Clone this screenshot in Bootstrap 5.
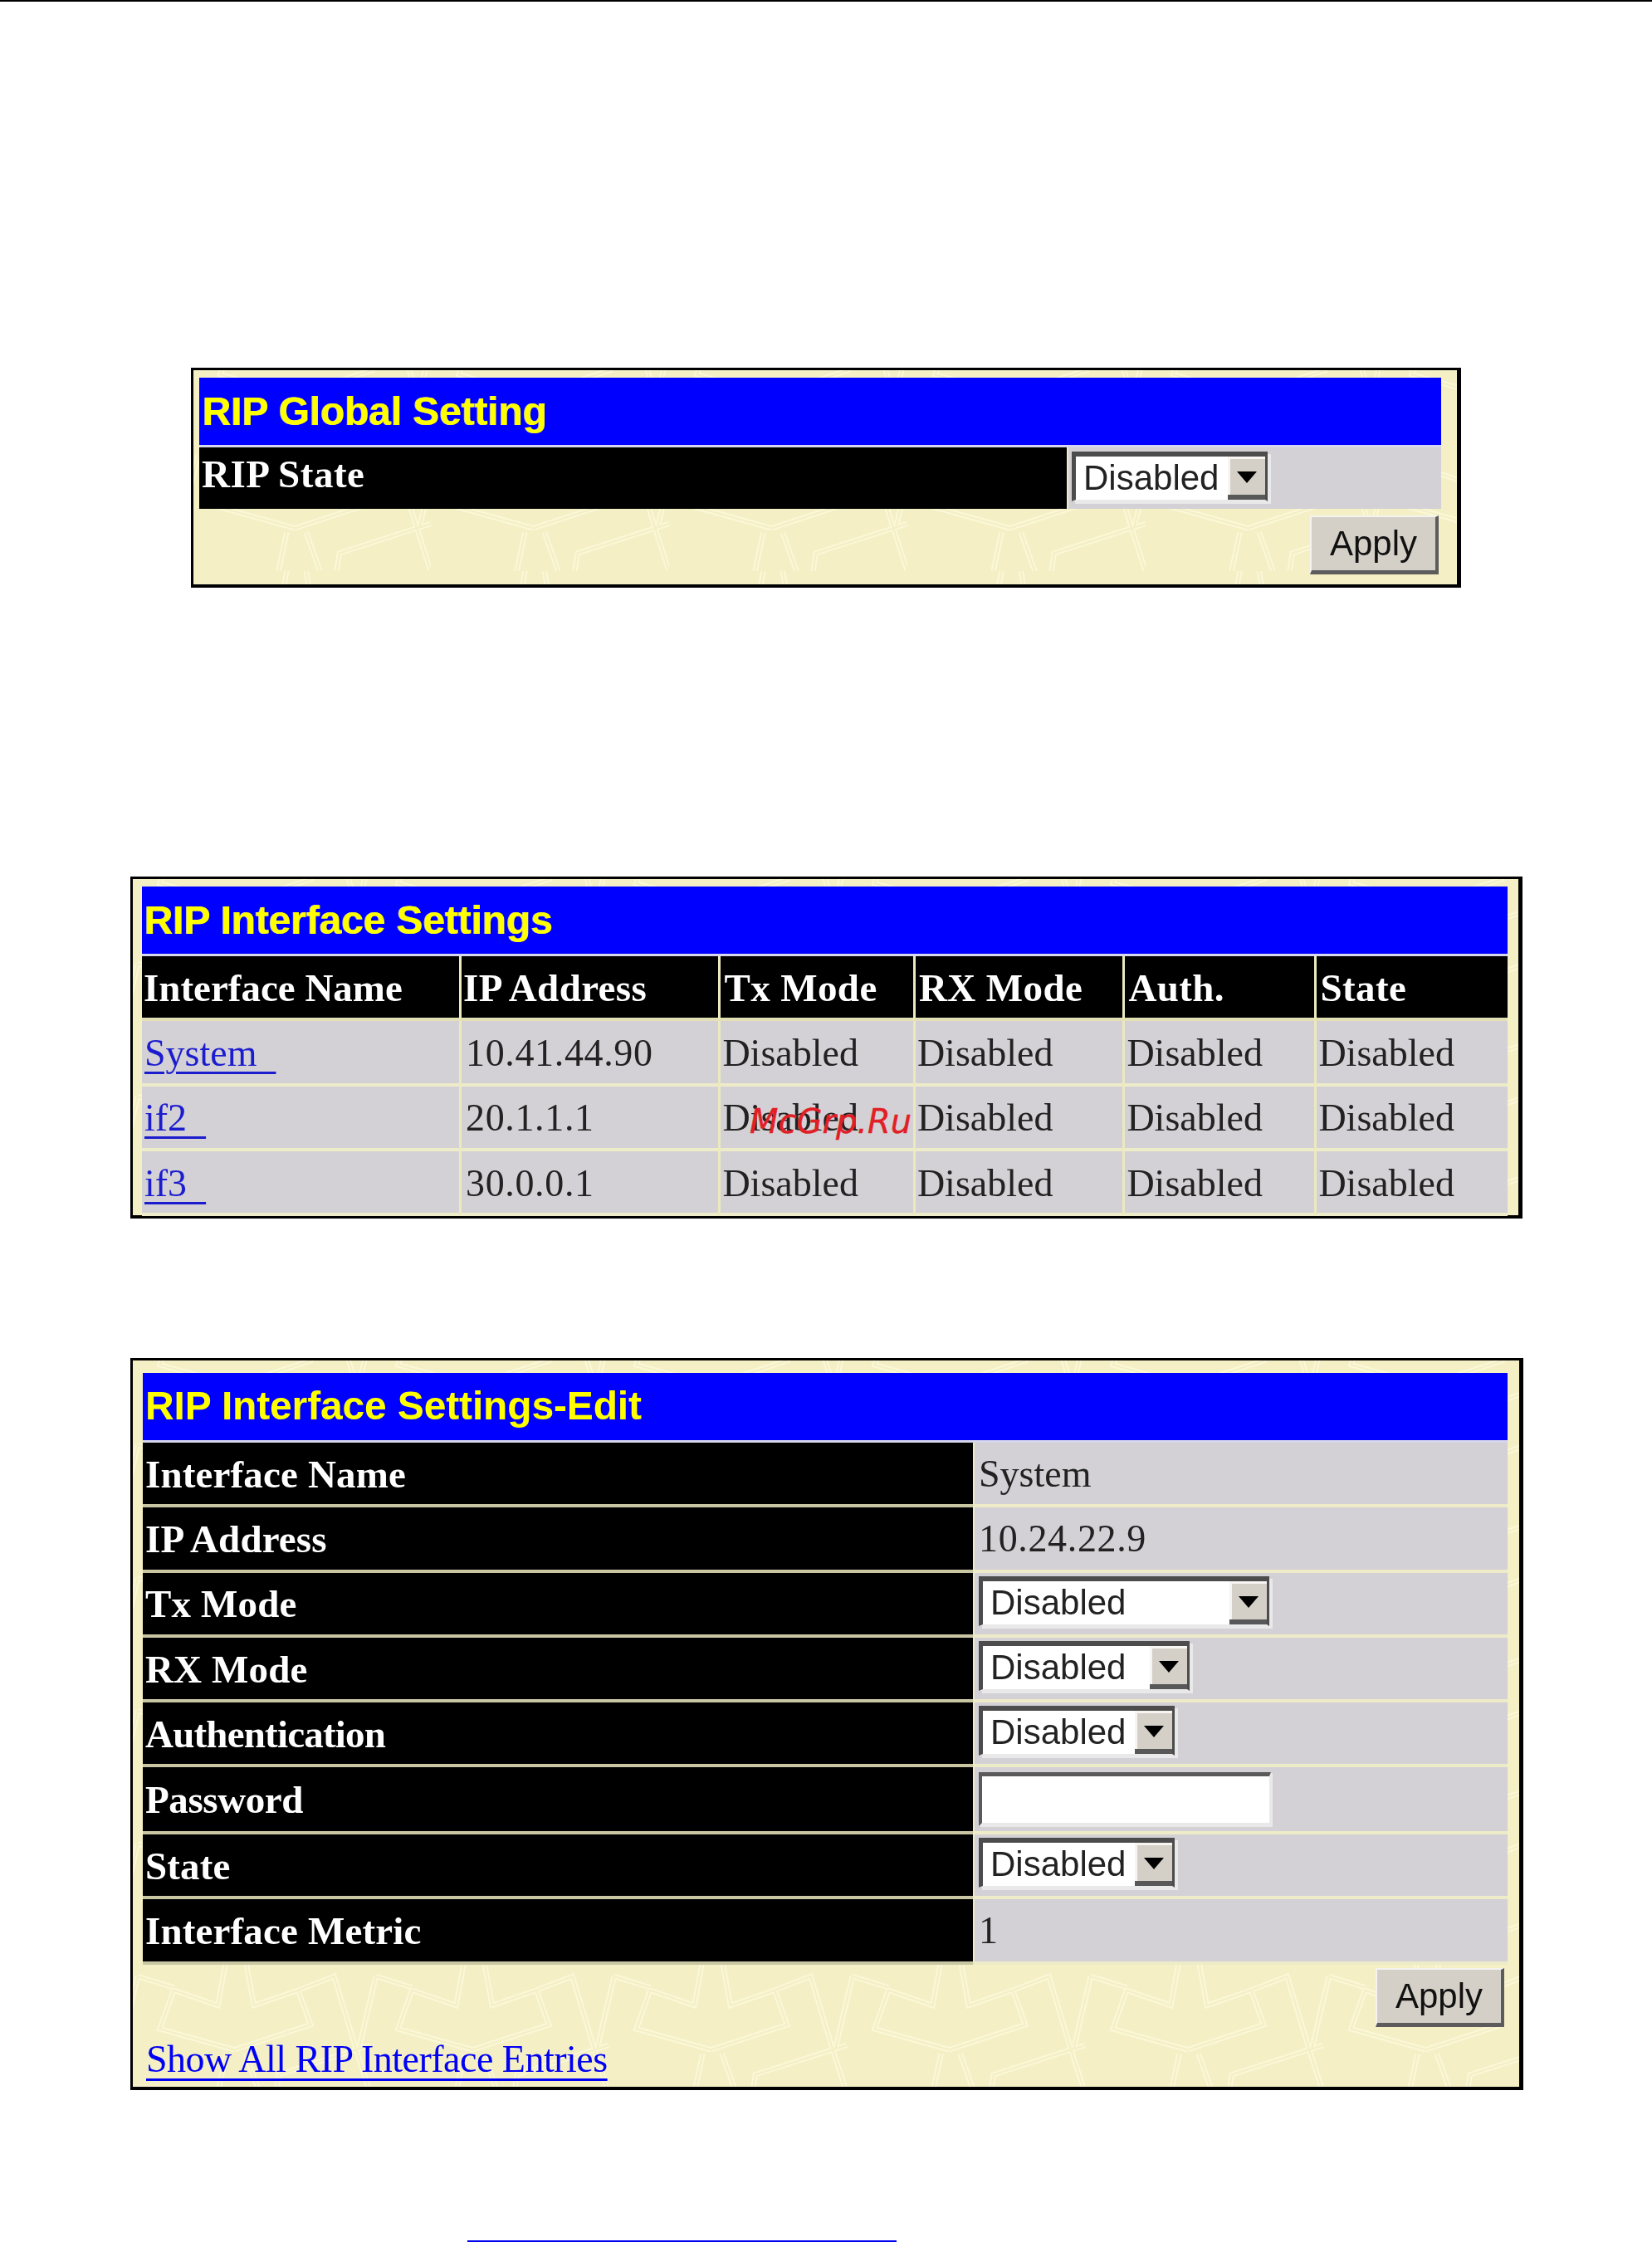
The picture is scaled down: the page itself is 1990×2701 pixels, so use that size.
<!doctype html>
<html lang="en">
<head>
<meta charset="utf-8">
<title>RIP Settings</title>
<link rel="stylesheet" href="https://cdn.jsdelivr.net/npm/bootstrap@5.3.0/dist/css/bootstrap.min.css">
<style>
html,body{background:#fff;margin:0;overflow:hidden}
body{height:2701px;position:relative}
.top-rule{height:2px;background:#000}
.frame-box{
  border:solid #000;border-width:3px 5px 4px 3px;
  background-color:#f4efc5;
  background-image:url("data:image/svg+xml,%3Csvg xmlns='http://www.w3.org/2000/svg' width='287' height='160' viewBox='0 0 860 480'%3E%3Cdefs%3E%3Cpath id='p' fill='none' d='M370 325L100 250L150 110L310 165L340 0M370 325L645 235L600 110L440 165L410 0M600 110L730 60L810 325L860 480M810 325L530 415L520 480M810 325L860 309M0 309L-20 315M20 60L150 100M20 60L-40 320M880 60L820 320M340 340L310 480M410 340L460 480'/%3E%3C/defs%3E%3Cuse href='%23p' stroke='%23fbf8d8' stroke-width='19'/%3E%3Cuse href='%23p' stroke='%23f4efc5' stroke-width='7'/%3E%3C/svg%3E");
  background-position:286px 82px;
  filter:blur(.6px);
  flex:none;
}
.frame-a{margin:441px 0 0 230px;width:1530px;height:265px;padding:9px 19px 0 7px}
.frame-b{margin:348px 0 0 157px;width:1677px;height:412.2px;padding:9px 13px 0 11px}
.frame-c{margin:167.8px 0 0 157px;width:1678px;height:881.6px;padding:15px 14px 0 12px}
.rip-title{
  background:#0000fe;color:#ff0;height:84px;
  border-bottom:3px solid #d6d6ec;padding-left:3px;
  font:bold 48px/1 "Liberation Sans",Arial,sans-serif;
  display:flex;align-items:center;letter-spacing:-.15px;
}
.frame-a .rip-title{padding-left:4px;text-shadow:-1px 0 #bdbdb0}
.frame-b .rip-title{text-shadow:-1px 0 #bdbdb0}
.rip-row{height:78.3px;display:flex}
.frame-a .rip-row{height:74px}
.frame-c .rip-row.row-tall{height:80.5px}
.lab,.val{
  display:flex;align-items:center;
  font:47px/1 "Liberation Serif","Times New Roman",serif;
  border-bottom:4px solid;
}
.lab{background:#000;color:#fff;font-weight:700;border-bottom-color:#c9c6a4;padding:2px 0 0 3px;letter-spacing:.15px}
.val{background:#d3d1d5;color:#222;font-size:46px;border-bottom-color:#edebc8;border-left:2px solid #edebc8;padding:0 0 0 5px;flex:1 1 0}
.frame-c .lab{width:1000px;flex:none}
.frame-a .lab{width:1045px;flex:none;padding:0 0 10px 3px;border-bottom:0;letter-spacing:.5px}
.frame-a .val{border-bottom:0;padding-left:4px}
.tight-a{letter-spacing:-.8px}
.tight-b{letter-spacing:-.4px}
.digits{letter-spacing:.65px}
.val-text{padding-top:2px}
.cw1{width:382px}.cw2{width:312.4px}.cw3{width:234.5px}.cw4{width:252.5px}.cw5{width:231px}.cw6{width:232.6px}
.cell-h,.cell-d{flex:none;display:flex;align-items:center;font:47px/1 "Liberation Serif","Times New Roman",serif;border-bottom:4px solid;padding-top:3px}
.cell-h{background:#000;color:#fff;font-weight:700;border-bottom-color:#e2e0b4;padding-left:4px;letter-spacing:.4px}
.cell-d{background:#d3d1d5;color:#222;font-size:46px;border-bottom-color:#edebc8;padding-left:2px}
.cell-h:not(:first-child),.cell-d:not(:first-child){border-left:3px solid #ebe9bd}
.cell-h:first-child{padding-left:2px;letter-spacing:0}
.cell-d:first-child{padding-left:3px}
.cell-d.digits{padding-left:5px}
.cell-h.head-ip{padding-left:2px}
.rip-link{color:#1c1ccf;text-decoration:underline;text-decoration-thickness:3px;text-underline-offset:7px;white-space:pre}
.rip-sel.form-select{
  height:60px;padding:0 50px 0 9px;margin-bottom:6px;flex:none;
  font:42px/1 "Liberation Sans",Arial,sans-serif;color:#222;border-radius:0;
  border:solid #4c4c4c;border-width:6px 3px 2px 5px;border-bottom-color:#e9e9ea;
  box-shadow:4px 3px 0 #e9e9ea;
  background:#fff url("data:image/svg+xml,%3Csvg xmlns='http://www.w3.org/2000/svg' viewBox='0 0 45 52' preserveAspectRatio='none'%3E%3Crect width='45' height='52' fill='%23d4d0c8'/%3E%3Cpath d='M0 0H45V3H3V52H0Z' fill='%23f6f5f2'/%3E%3Cpath d='M0 46H45V52H0Z' fill='%23585858'/%3E%3Cpath d='M11 18H35L23 32Z' fill='%23000'/%3E%3C/svg%3E") right top/45px 100% no-repeat;
}
.sw-a{width:236px}.sw-b{width:350px}.sw-c{width:254px}.sw-d{width:236px}
.frame-a .rip-sel.form-select{margin-bottom:4px}
.rip-inp.form-control{
  width:352px;height:65px;padding:0 8px;border-radius:0;flex:none;
  border:solid;border-width:5px 2px 4px 4px;
  border-color:#5a5a5a #e9e9ea #e9e9ea #5a5a5a;background:#fff;
  box-shadow:2px 1px 0 #e9e9ea;
}
.rip-btn.btn{
  width:155px;height:71px;padding:0;border-radius:0;
  background:#d4d0c8;color:#111;
  font:42px/1 "Liberation Sans",Arial,sans-serif;
  border:solid;border-width:2px 4px 5px 2px;
  border-color:#f4f3ef #5c5c5c #5c5c5c #f4f3ef;
}
.foot-a{height:92px;padding:8px 3px 0 0}
.foot-c{height:147.4px;padding:4px 4px 10px 4px}
.foot-link{font:46px/1 "Liberation Serif","Times New Roman",serif;color:#0000f5;text-decoration:underline;text-decoration-thickness:3px;text-underline-offset:8px;letter-spacing:-.5px}
.water-mark{
  position:absolute;left:903px;top:1331px;
  font:italic 40px/1 "DejaVu Sans",sans-serif;color:#e01f26;white-space:nowrap;
  -webkit-text-stroke:.4px #e01f26;
}
.end-rule{height:2px;width:517px;background:#0000f0;margin:181px 0 0 563px}
</style>
</head>
<body class="d-flex flex-column">
<div class="top-rule"></div>

<section class="frame-box frame-a">
  <div class="rip-title">RIP Global Setting</div>
  <div class="rip-row">
    <div class="lab">RIP State</div>
    <div class="val"><select class="form-select rip-sel sw-a"><option>Disabled</option></select></div>
  </div>
  <div class="foot-a d-flex justify-content-end align-items-start">
    <button type="button" class="btn rip-btn">Apply</button>
  </div>
</section>

<section class="frame-box frame-b">
  <div class="rip-title">RIP Interface Settings</div>
  <div class="rip-row">
    <div class="cell-h cw1">Interface Name</div><div class="cell-h cw2 head-ip">IP Address</div><div class="cell-h cw3">Tx Mode</div><div class="cell-h cw4">RX Mode</div><div class="cell-h cw5">Auth.</div><div class="cell-h cw6">State</div>
  </div>
  <div class="rip-row">
    <div class="cell-d cw1"><a href="#" class="rip-link">System  </a></div><div class="cell-d cw2 digits">10.41.44.90</div><div class="cell-d cw3">Disabled</div><div class="cell-d cw4">Disabled</div><div class="cell-d cw5">Disabled</div><div class="cell-d cw6">Disabled</div>
  </div>
  <div class="rip-row">
    <div class="cell-d cw1"><a href="#" class="rip-link">if2  </a></div><div class="cell-d cw2 digits">20.1.1.1</div><div class="cell-d cw3">Disabled</div><div class="cell-d cw4">Disabled</div><div class="cell-d cw5">Disabled</div><div class="cell-d cw6">Disabled</div>
  </div>
  <div class="rip-row">
    <div class="cell-d cw1"><a href="#" class="rip-link">if3  </a></div><div class="cell-d cw2 digits">30.0.0.1</div><div class="cell-d cw3">Disabled</div><div class="cell-d cw4">Disabled</div><div class="cell-d cw5">Disabled</div><div class="cell-d cw6">Disabled</div>
  </div>
</section>

<section class="frame-box frame-c">
  <div class="rip-title">RIP Interface Settings-Edit</div>
  <div class="rip-row"><div class="lab">Interface Name</div><div class="val val-text">System</div></div>
  <div class="rip-row"><div class="lab">IP Address</div><div class="val val-text digits">10.24.22.9</div></div>
  <div class="rip-row"><div class="lab">Tx Mode</div><div class="val"><select class="form-select rip-sel sw-b"><option>Disabled</option></select></div></div>
  <div class="rip-row"><div class="lab">RX Mode</div><div class="val"><select class="form-select rip-sel sw-c"><option>Disabled</option></select></div></div>
  <div class="rip-row"><div class="lab tight-a">Authentication</div><div class="val"><select class="form-select rip-sel sw-d"><option>Disabled</option></select></div></div>
  <div class="rip-row row-tall"><div class="lab tight-b">Password</div><div class="val"><input type="password" class="form-control rip-inp" aria-label="Password"></div></div>
  <div class="rip-row"><div class="lab">State</div><div class="val"><select class="form-select rip-sel sw-d"><option>Disabled</option></select></div></div>
  <div class="rip-row"><div class="lab">Interface Metric</div><div class="val val-text">1</div></div>
  <div class="foot-c d-flex flex-column">
    <button type="button" class="btn rip-btn align-self-end">Apply</button>
    <a href="#" class="foot-link mt-auto align-self-start">Show All RIP Interface Entries</a>
  </div>
</section>

<div class="end-rule"></div>
<div class="water-mark">McGrp.Ru</div>
<script src="https://cdn.jsdelivr.net/npm/bootstrap@5.3.0/dist/js/bootstrap.bundle.min.js"></script>
</body>
</html>
